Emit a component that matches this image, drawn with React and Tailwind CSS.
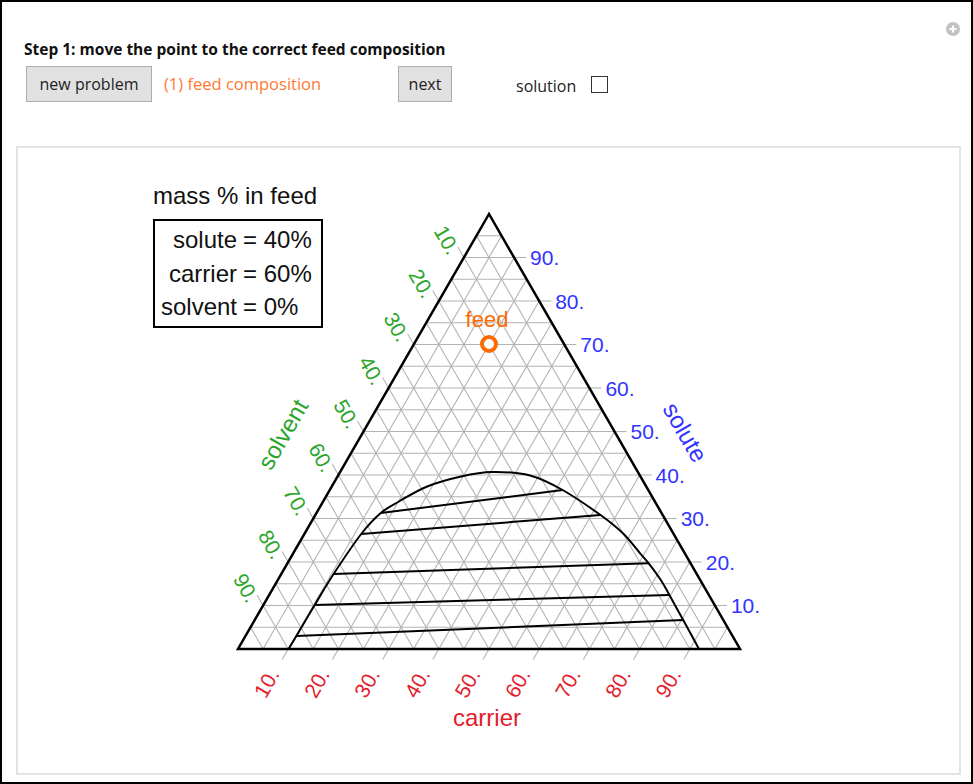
import React from 'react';

const T = [489, 214];
const L = [238, 649];
const R = [740, 649];

// barycentric point: solute (top), carrier (bottom right), solvent (bottom left)
const pt = (u, c, s) => [u * T[0] + c * R[0] + s * L[0], u * T[1] + c * R[1] + s * L[1]];

const binodal = [
  [288.5, 649], [296.4, 636], [314.7, 605], [333.6, 574], [361.2, 534], [380.8, 513],
  [399, 501.5], [426.6, 486.7], [461, 476.5], [492, 472], [530, 475.5], [562.6, 490],
  [600.5, 515], [622.9, 533.3], [640.1, 553.3], [648.7, 563.3], [660.8, 580], [669.4, 595],
  [683.2, 620], [699, 649],
];

const ties = [
  [[380.8, 513], [562.6, 490]],
  [[361.2, 534], [600.5, 515]],
  [[333.6, 574], [648.7, 563.3]],
  [[314.7, 605], [669.4, 595]],
  [[296.4, 636], [683.2, 620]],
];

function smoothPath(p) {
  let d = `M${p[0][0]},${p[0][1]}`;
  for (let i = 0; i < p.length - 1; i++) {
    const p0 = p[i - 1] || p[i];
    const p1 = p[i];
    const p2 = p[i + 1];
    const p3 = p[i + 2] || p2;
    const c1 = [p1[0] + (p2[0] - p0[0]) / 6, p1[1] + (p2[1] - p0[1]) / 6];
    const c2 = [p2[0] - (p3[0] - p1[0]) / 6, p2[1] - (p3[1] - p1[1]) / 6];
    d += ` C${c1[0]},${c1[1]} ${c2[0]},${c2[1]} ${p2[0]},${p2[1]}`;
  }
  return d;
}

const GREEN = '#2aa52a';
const BLUE = '#3333ff';
const RED = '#e3202b';
const ORANGE = '#ff6a00';

function TernaryPlot() {
  const grid = [];
  for (let k = 1; k < 20; k++) {
    const f = k / 20;
    grid.push([pt(f, 1 - f, 0), pt(f, 0, 1 - f)]);
    grid.push([pt(0, f, 1 - f), pt(1 - f, f, 0)]);
    grid.push([pt(0, 1 - f, f), pt(1 - f, 0, f)]);
  }
  const ticks = [];
  const nums = [1, 2, 3, 4, 5, 6, 7, 8, 9];
  nums.forEach((k) => {
    const f = k / 10;
    const a = pt(f, 1 - f, 0);
    ticks.push([a, [a[0] + 12, a[1]]]);
    const b = pt(0, f, 1 - f);
    ticks.push([b, [b[0] - 6, b[1] + 10.4]]);
    const c = pt(1 - f, 0, f);
    ticks.push([c, [c[0] - 6, c[1] - 10.4]]);
  });

  return (
    <svg width="941" height="625" viewBox="18 148 941 625" style={{ fontFamily: '"Liberation Sans", Arial, sans-serif' }}>
      <g stroke="#b3b3b3" strokeWidth="1.1">
        {grid.map(([a, b], i) => (
          <line key={i} x1={a[0]} y1={a[1]} x2={b[0]} y2={b[1]} />
        ))}
        {ticks.map(([a, b], i) => (
          <line key={'t' + i} x1={a[0]} y1={a[1]} x2={b[0]} y2={b[1]} />
        ))}
      </g>
      <polygon points={`${T} ${L} ${R}`} fill="none" stroke="#000" strokeWidth="2.5" strokeLinejoin="miter" />
      <path d={smoothPath(binodal)} fill="none" stroke="#000" strokeWidth="2" />
      {ties.map(([a, b], i) => (
        <line key={i} x1={a[0]} y1={a[1]} x2={b[0]} y2={b[1]} stroke="#000" strokeWidth="2" />
      ))}

      {/* solute axis */}
      {nums.map((k) => {
        const a = pt(k / 10, 1 - k / 10, 0);
        return (
          <text key={'u' + k} x={a[0] + 16} y={a[1] + 7.5} fontSize="21" fill={BLUE}>
            {k * 10}.
          </text>
        );
      })}
      {/* solvent axis */}
      {nums.map((k) => (
        <text
          key={'s' + k}
          transform={`translate(${447 - 25.1 * (k - 1)},${240 + 43.5 * (k - 1)}) rotate(60)`}
          y="7.5"
          textAnchor="middle"
          fontSize="21"
          fill={GREEN}
        >
          {k * 10}.
        </text>
      ))}
      {/* carrier axis */}
      {nums.map((k) => (
        <text
          key={'c' + k}
          transform={`translate(${266.5 + 50.2 * (k - 1)},683) rotate(-60)`}
          y="7.5"
          textAnchor="middle"
          fontSize="21"
          fill={RED}
        >
          {k * 10}.
        </text>
      ))}

      <text x="487" y="726" textAnchor="middle" fontSize="24" fill={RED}>carrier</text>
      <text transform="translate(284,435) rotate(-60)" y="7" textAnchor="middle" fontSize="24" fill={GREEN}>solvent</text>
      <text transform="translate(684,433) rotate(60)" y="7" textAnchor="middle" fontSize="24" fill={BLUE}>solute</text>

      <text x="487" y="327" textAnchor="middle" fontSize="22" fill={ORANGE}>feed</text>
      <circle cx="489" cy="344" r="7" fill="#fff" stroke={ORANGE} strokeWidth="4" />

      {/* legend, aligned on "=" */}
      <text x="153" y="204" fontSize="24" fill="#111">mass % in feed</text>
      <rect x="154" y="220" width="168" height="107" fill="#fff" stroke="#000" strokeWidth="2" />
      <g fontSize="24" fill="#111">
        <text x="237" y="248" textAnchor="end">solute</text>
        <text x="243" y="248">= 40%</text>
        <text x="237" y="282" textAnchor="end">carrier</text>
        <text x="243" y="282">= 60%</text>
        <text x="237" y="315" textAnchor="end">solvent</text>
        <text x="243" y="315">= 0%</text>
      </g>
    </svg>
  );
}

export default function App() {
  return (
    <div className="relative w-[973px] h-[784px] border-2 border-black bg-white font-['Open_Sans',sans-serif] text-[#1a1a1a]">
      <svg className="absolute top-[20px] right-[11px]" width="14" height="14" viewBox="0 0 14 14">
        <circle cx="7" cy="7" r="7" fill="#c2c2c2" />
        <path d="M7 3.5v7M3.5 7h7" stroke="#fff" strokeWidth="2" />
      </svg>

      <div className="pl-[22px] pt-[38px]">
        <div className="text-[15.5px] leading-[18px] font-bold text-[#111]">
          Step 1: move the point to the correct feed composition
        </div>
        <div className="mt-[8px] flex items-center h-[36px]">
          <button className="ml-[2px] w-[126px] h-[36px] bg-[#e1e1e1] border border-[#adadad] text-[16px] text-[#222]">
            new problem
          </button>
          <span className="ml-[12px] w-[234px] text-[16.5px] text-[#ff7a30]">(1) feed composition</span>
          <button className="w-[54px] h-[36px] bg-[#e1e1e1] border border-[#adadad] text-[16px] text-[#222]">
            next
          </button>
          <span className="ml-[64px] mt-[3px] text-[16px] text-[#222]">solution</span>
          <span className="ml-[15px] w-[17px] h-[17px] border border-[#333] bg-white" />
        </div>
      </div>

      <div className="ml-[14px] mt-[44px] w-[945px] h-[629px] border-2 border-[#e3e3e3] bg-white">
        <TernaryPlot />
      </div>
    </div>
  );
}
